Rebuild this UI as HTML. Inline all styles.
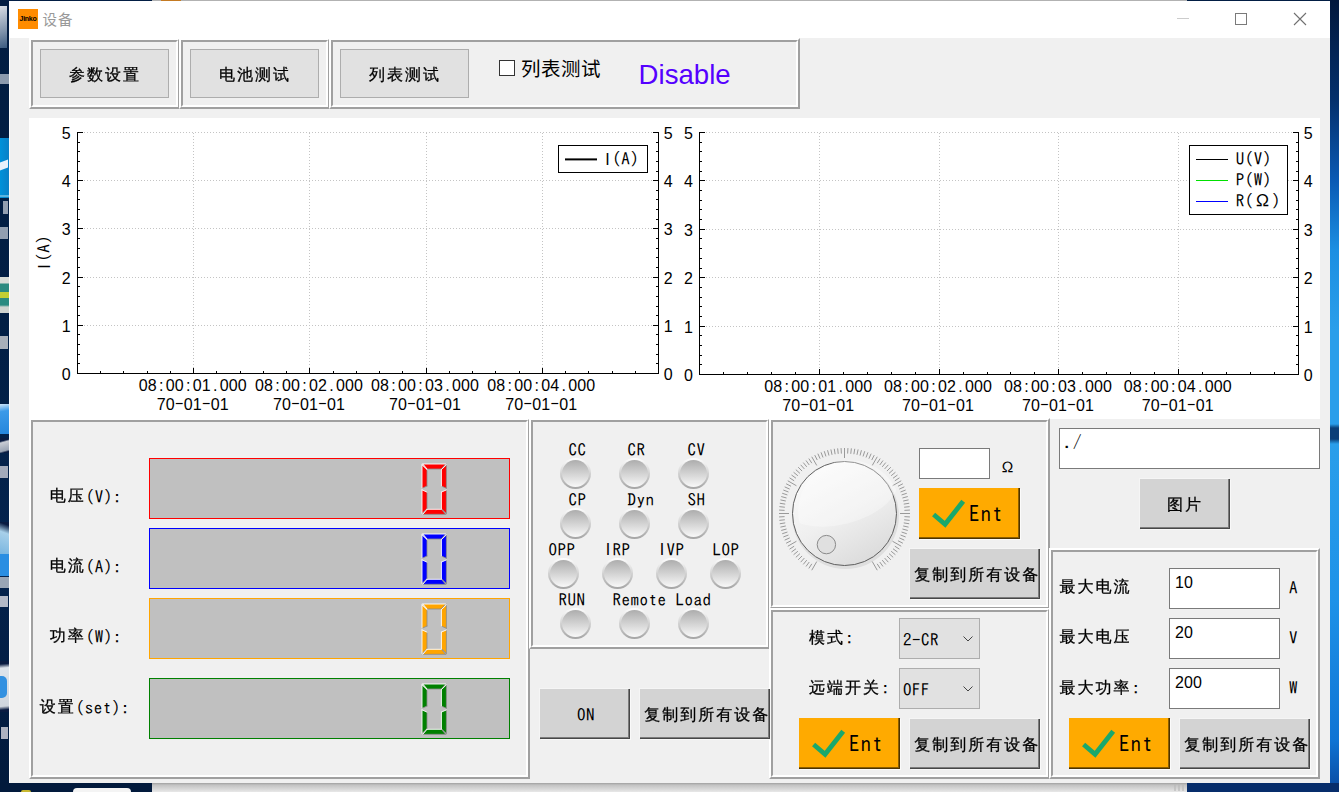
<!DOCTYPE html><html lang="zh"><head><meta charset="utf-8"><title>设备</title><style>
*{box-sizing:border-box;margin:0;padding:0}
html,body{width:1339px;height:792px;overflow:hidden}
body{position:relative;background:#021e44;font-family:"IPAGothic","Liberation Mono","WenQuanYi Zen Hei",monospace;font-size:17px;letter-spacing:.5px;color:#000;line-height:18px}
div,span,svg,i,b{position:absolute;display:block}
.cj{font-family:"Liberation Sans","WenQuanYi Zen Hei","Noto Sans CJK SC",sans-serif;font-size:16px;letter-spacing:2px;-webkit-text-stroke:.28px #000}
.la{font-family:"IPAGothic","Liberation Mono",monospace;font-size:17px;letter-spacing:.5px;position:relative;top:1.5px;display:inline;-webkit-text-stroke:0}
.nm{font-family:"Liberation Sans",sans-serif;font-size:16px;letter-spacing:.1px}
.win{left:9px;top:1px;width:1321px;height:782px;background:#f0f0f0;box-shadow:inset 1px 0 0 #fbfbfb}
.tb{left:0;top:0;width:1321px;height:37px;background:#fff}
.box{border:2px solid;border-color:#fff #a0a0a0 #a0a0a0 #fff;background:#f0f0f0}
.box:before{content:"";position:absolute;left:0;top:0;right:0;bottom:0;border:2px solid;border-color:#a0a0a0 #fff #fff #a0a0a0}
.tbtn{border:1px solid #adadad;background:#e1e1e1;text-align:center;line-height:50px;height:49px;width:129px;padding-left:1px}
.btn{background:#d3d3d3;box-shadow:inset -1px -1px 0 #474747,inset -2px -2px 0 #7c7c7c,1px 1px 0 #f9f9f9,-1px -1px 0 #f5f5f5;text-align:center;white-space:nowrap;overflow:hidden}
.ent{background:#ffaa00;box-shadow:inset -1px -1px 0 #4d3300,inset -2px -2px 0 #8c5e00,1px 1px 0 #fbfbfb}
.lcd{background:#c0c0c0;border:1px solid;width:361px;height:61px;left:140px}
.inp{background:#fff;border:1px solid #7a7a7a}
.cmb{background:#e1e1e1;border:1px solid #adadad;width:81px;height:41px}
.lbl{white-space:nowrap}
.ip{font-family:"IPAGothic","Liberation Mono",monospace;font-size:17px;letter-spacing:0}
.led{width:31px;height:31px;border-radius:50%;background:linear-gradient(#fff,#a4a4a4)}
.led:before{content:"";position:absolute;left:2px;top:2px;right:2px;bottom:2px;border-radius:50%;background:linear-gradient(#adadad,#f8f8f8)}
</style></head><body>
<div style="left:0;top:0;width:9px;height:792px;background:linear-gradient(#021d42,#021f45 40%,#04234e 70%,#021a3c)"><i style="left:0;top:6px;width:7px;height:42px;background:linear-gradient(160deg,#d8dde4,#7f93ab 60%,#3a5a80)"></i><i style="left:0;top:74px;width:9px;height:10px;background:#c8d0dc;opacity:.7"></i><i style="left:0;top:138px;width:9px;height:60px;background:linear-gradient(90deg,#0092da,#0a80c6)"></i><i style="left:0;top:195px;width:9px;height:2px;background:#5ab4e0"></i><i style="left:0;top:161px;width:8px;height:8px;background:#e8f2fb;transform:skewY(-20deg)"></i><i style="left:3px;top:201px;width:5px;height:13px;background:#d0d6e0;opacity:.7"></i><i style="left:0;top:227px;width:8px;height:12px;background:#d0d6e0;opacity:.7"></i><i style="left:0;top:277px;width:9px;height:36px;background:linear-gradient(#d8dcd8 0,#d8dcd8 6px,#2a8a80 7px,#2a8a80 28px,#d0d4d0 30px)"></i><i style="left:0;top:292px;width:9px;height:6px;background:#e8e020;opacity:.8"></i><i style="left:0;top:336px;width:8px;height:13px;background:#e0e0e0;opacity:.75"></i><i style="left:0;top:404px;width:9px;height:30px;background:linear-gradient(170deg,#cfe6fa 0,#3b9ae8 25%,#2586dc)"></i><i style="left:0;top:438px;width:9px;height:15px;background:linear-gradient(165deg,#0a1c42 20%,#c8ccd4 30%,#9aa4b4 80%,#0a1c42 90%)"></i><i style="left:0;top:466px;width:8px;height:12px;background:#d8d8e0;opacity:.75"></i><i style="left:0;top:522px;width:9px;height:32px;background:linear-gradient(200deg,#0a1c42 10%,#a8d0ea 35%,#7ab6e0)"></i><i style="left:0;top:554px;width:9px;height:22px;background:#2a8ee2"></i><i style="left:0;top:577px;width:9px;height:11px;background:#9aa6b6"></i><i style="left:0;top:596px;width:8px;height:11px;background:#e0e0e6;opacity:.8"></i><i style="left:0;top:661px;width:9px;height:51px;background:linear-gradient(175deg,#0a1c42 6%,#dfe5ec 14%,#cfd6de 88%,#0a1c42 95%)"></i><i style="left:0;top:676px;width:7px;height:22px;background:#2088e0;border-radius:0 5px 5px 0;opacity:.9"></i><i style="left:1px;top:727px;width:7px;height:12px;background:#d8d8e0;opacity:.8"></i></div>
<div style="left:1330px;top:0;width:9px;height:792px;background:linear-gradient(#02183c 0,#04306c 100px,#0a5ab4 180px,#1c8fe2 250px,#2a9eea 330px,#2a9eea 424px,#0b3f78 428px,#0b3f78 439px,#2a9eea 444px,#1e92e8 600px,#0f74d4 740px,#0a50a8 783px,#06245a 792px)"></div>
<div style="left:0;top:783px;width:1339px;height:9px;background:#021a3c"></div>
<div style="left:152px;top:783px;width:1035px;height:9px;background:linear-gradient(#a0a0a0,#c2c2c2 2px,#e8e8e8)"></div>
<div style="left:1187px;top:783px;width:152px;height:9px;background:#072d6b"></div><div style="left:1174px;top:784px;width:11px;height:7px;background:repeating-linear-gradient(90deg,#b8b8b8 0 2px,transparent 2px 4px);opacity:.6"></div>
<div style="left:73px;top:788px;width:58px;height:8px;background:#f4f4f4;border-radius:5px"></div><div style="left:21px;top:790px;width:10px;height:4px;background:#c8b830;border-radius:4px"></div>
<div style="left:152px;top:0;width:1035px;height:1px;background:#b2b2b2"></div><div style="left:161px;top:0;width:20px;height:1px;background:#c47a22"></div>
<div class="win">
<div class="tb"></div>
<div style="left:9px;top:8px;width:20px;height:20px;background:#ff8c00;font:bold 7px/20px 'Liberation Sans',sans-serif;text-align:center;letter-spacing:-0.3px">Jinko</div>
<div class="lbl" style="left:33.5px;top:7.5px;font:14.5px/22px 'Liberation Sans','Noto Sans CJK SC',sans-serif;letter-spacing:1px;color:#999">设备</div>
<svg style="left:1161px;top:7px" width="150" height="24" viewBox="1170 8 150 24"><path d="M1177 18.5H1189" stroke="#ccc" stroke-width="1"/><rect x="1235.5" y="13.5" width="11" height="11" fill="none" stroke="#7a7a7a"/><path d="M1294 13L1306 25M1306 13L1294 25" stroke="#707070" stroke-width="1.1"/></svg>
<div class="box" style="left:20px;top:37px;width:151px;height:71px"></div>
<div class="box" style="left:170px;top:37px;width:151px;height:71px"></div>
<div class="box" style="left:320px;top:37px;width:471px;height:71px"></div>
<div class="tbtn cj" style="left:31px;top:48px">参数设置</div>
<div class="tbtn cj" style="left:181px;top:48px">电池测试</div>
<div class="tbtn cj" style="left:331px;top:48px">列表测试</div>
<div style="left:490px;top:59px;width:16px;height:16px;background:#fff;border:1px solid #333"></div>
<div class="lbl" style="left:512px;top:55.2px;font:19.5px/26px 'Liberation Sans','Noto Sans CJK SC',sans-serif;letter-spacing:.5px">列表测试</div>
<div class="lbl" style="left:629.6px;top:57.6px;font:27.6px/32px 'Liberation Sans',sans-serif;letter-spacing:0;color:#5500ff">Disable</div>
<div style="left:20px;top:117px;width:1291px;height:301px;background:#fff"></div>
<svg style="left:20px;top:117px" width="1291" height="301" viewBox="29 118 1291 301" font-family="IPAGothic,'Liberation Mono',monospace" font-size="17" letter-spacing="0.5"><path d="M78 325.5H658M78 277.5H658M78 228.5H658M78 180.5H658M78 132.5H658M193.5 133.0V373.5M309.5 133.0V373.5M426.5 133.0V373.5M542.5 133.0V373.5" stroke="#c4c4c4" stroke-width="1" stroke-dasharray="1 2" fill="none"/><path d="M77.5 132.0V374.0M658.5 132.0V374.0M77 373.5H659M78 373.5h5M658 373.5h-5M78 363.5h2M658 363.5h-2M78 354.5h2M658 354.5h-2M78 344.5h2M658 344.5h-2M78 334.5h2M658 334.5h-2M78 325.5h5M658 325.5h-5M78 315.5h2M658 315.5h-2M78 306.5h2M658 306.5h-2M78 296.5h2M658 296.5h-2M78 286.5h2M658 286.5h-2M78 277.5h5M658 277.5h-5M78 267.5h2M658 267.5h-2M78 257.5h2M658 257.5h-2M78 248.5h2M658 248.5h-2M78 238.5h2M658 238.5h-2M78 228.5h5M658 228.5h-5M78 219.5h2M658 219.5h-2M78 209.5h2M658 209.5h-2M78 199.5h2M658 199.5h-2M78 190.5h2M658 190.5h-2M78 180.5h5M658 180.5h-5M78 171.5h2M658 171.5h-2M78 161.5h2M658 161.5h-2M78 151.5h2M658 151.5h-2M78 142.5h2M658 142.5h-2M78 132.5h5M658 132.5h-5M100.5 373.0v-2M123.5 373.0v-2M147.5 373.0v-2M170.5 373.0v-2M193.5 373.0v-5M216.5 373.0v-2M240.5 373.0v-2M263.5 373.0v-2M286.5 373.0v-2M309.5 373.0v-5M333.5 373.0v-2M356.5 373.0v-2M379.5 373.0v-2M402.5 373.0v-2M426.5 373.0v-5M449.5 373.0v-2M472.5 373.0v-2M495.5 373.0v-2M519.5 373.0v-2M542.5 373.0v-5M565.5 373.0v-2M588.5 373.0v-2M612.5 373.0v-2M635.5 373.0v-2" stroke="#000" stroke-width="1" fill="none"/><text class="nm" x="66.2" y="380.0" text-anchor="middle">0</text><text class="nm" x="668.2" y="380.0" text-anchor="middle">0</text><text class="nm" x="66.2" y="332.0" text-anchor="middle">1</text><text class="nm" x="668.2" y="332.0" text-anchor="middle">1</text><text class="nm" x="66.2" y="284.0" text-anchor="middle">2</text><text class="nm" x="668.2" y="284.0" text-anchor="middle">2</text><text class="nm" x="66.2" y="235.0" text-anchor="middle">3</text><text class="nm" x="668.2" y="235.0" text-anchor="middle">3</text><text class="nm" x="66.2" y="187.0" text-anchor="middle">4</text><text class="nm" x="668.2" y="187.0" text-anchor="middle">4</text><text class="nm" x="66.2" y="139.0" text-anchor="middle">5</text><text class="nm" x="668.2" y="139.0" text-anchor="middle">5</text><text class="nm" x="143.2 152.2 161.2 170.2 179.2 188.2 197.2 206.2 215.2 224.2 233.2 242.2" y="391.0" text-anchor="middle">08:00:01.000</text><text class="nm" x="161.2 170.2 179.2 188.2 197.2 206.2 215.2 224.2" y="410.0" text-anchor="middle">70<tspan class="ip">-</tspan>01<tspan class="ip">-</tspan>01</text><text class="nm" x="259.4 268.4 277.4 286.4 295.4 304.4 313.4 322.4 331.4 340.4 349.4 358.4" y="391.0" text-anchor="middle">08:00:02.000</text><text class="nm" x="277.4 286.4 295.4 304.4 313.4 322.4 331.4 340.4" y="410.0" text-anchor="middle">70<tspan class="ip">-</tspan>01<tspan class="ip">-</tspan>01</text><text class="nm" x="375.6 384.6 393.6 402.6 411.6 420.6 429.6 438.6 447.6 456.6 465.6 474.6" y="391.0" text-anchor="middle">08:00:03.000</text><text class="nm" x="393.6 402.6 411.6 420.6 429.6 438.6 447.6 456.6" y="410.0" text-anchor="middle">70<tspan class="ip">-</tspan>01<tspan class="ip">-</tspan>01</text><text class="nm" x="491.8 500.8 509.8 518.8 527.8 536.8 545.8 554.8 563.8 572.8 581.8 590.8" y="391.0" text-anchor="middle">08:00:04.000</text><text class="nm" x="509.8 518.8 527.8 536.8 545.8 554.8 563.8 572.8" y="410.0" text-anchor="middle">70<tspan class="ip">-</tspan>01<tspan class="ip">-</tspan>01</text><path d="M700 326.5H1298M700 277.5H1298M700 229.5H1298M700 180.5H1298M700 132.5H1298M819.5 133.0V374.5M939.5 133.0V374.5M1058.5 133.0V374.5M1178.5 133.0V374.5" stroke="#c4c4c4" stroke-width="1" stroke-dasharray="1 2" fill="none"/><path d="M699.5 132.0V375.0M1298.5 132.0V375.0M699 374.5H1299M700 374.5h5M1298 374.5h-5M700 364.5h2M1298 364.5h-2M700 355.5h2M1298 355.5h-2M700 345.5h2M1298 345.5h-2M700 335.5h2M1298 335.5h-2M700 326.5h5M1298 326.5h-5M700 316.5h2M1298 316.5h-2M700 306.5h2M1298 306.5h-2M700 297.5h2M1298 297.5h-2M700 287.5h2M1298 287.5h-2M700 277.5h5M1298 277.5h-5M700 268.5h2M1298 268.5h-2M700 258.5h2M1298 258.5h-2M700 248.5h2M1298 248.5h-2M700 238.5h2M1298 238.5h-2M700 229.5h5M1298 229.5h-5M700 219.5h2M1298 219.5h-2M700 209.5h2M1298 209.5h-2M700 200.5h2M1298 200.5h-2M700 190.5h2M1298 190.5h-2M700 180.5h5M1298 180.5h-5M700 171.5h2M1298 171.5h-2M700 161.5h2M1298 161.5h-2M700 151.5h2M1298 151.5h-2M700 142.5h2M1298 142.5h-2M700 132.5h5M1298 132.5h-5M723.5 374.0v-2M747.5 374.0v-2M771.5 374.0v-2M795.5 374.0v-2M819.5 374.0v-5M843.5 374.0v-2M867.5 374.0v-2M891.5 374.0v-2M915.5 374.0v-2M939.5 374.0v-5M963.5 374.0v-2M987.5 374.0v-2M1010.5 374.0v-2M1034.5 374.0v-2M1058.5 374.0v-5M1082.5 374.0v-2M1106.5 374.0v-2M1130.5 374.0v-2M1154.5 374.0v-2M1178.5 374.0v-5M1202.5 374.0v-2M1226.5 374.0v-2M1250.5 374.0v-2M1274.5 374.0v-2" stroke="#000" stroke-width="1" fill="none"/><text class="nm" x="688.4" y="381.0" text-anchor="middle">0</text><text class="nm" x="1308.2" y="381.0" text-anchor="middle">0</text><text class="nm" x="688.4" y="333.0" text-anchor="middle">1</text><text class="nm" x="1308.2" y="333.0" text-anchor="middle">1</text><text class="nm" x="688.4" y="284.0" text-anchor="middle">2</text><text class="nm" x="1308.2" y="284.0" text-anchor="middle">2</text><text class="nm" x="688.4" y="236.0" text-anchor="middle">3</text><text class="nm" x="1308.2" y="236.0" text-anchor="middle">3</text><text class="nm" x="688.4" y="187.0" text-anchor="middle">4</text><text class="nm" x="1308.2" y="187.0" text-anchor="middle">4</text><text class="nm" x="688.4" y="139.0" text-anchor="middle">5</text><text class="nm" x="1308.2" y="139.0" text-anchor="middle">5</text><text class="nm" x="768.8 777.8 786.8 795.8 804.8 813.8 822.8 831.8 840.8 849.8 858.8 867.8" y="392.0" text-anchor="middle">08:00:01.000</text><text class="nm" x="786.8 795.8 804.8 813.8 822.8 831.8 840.8 849.8" y="411.0" text-anchor="middle">70<tspan class="ip">-</tspan>01<tspan class="ip">-</tspan>01</text><text class="nm" x="888.6 897.6 906.6 915.6 924.6 933.6 942.6 951.6 960.6 969.6 978.6 987.6" y="392.0" text-anchor="middle">08:00:02.000</text><text class="nm" x="906.6 915.6 924.6 933.6 942.6 951.6 960.6 969.6" y="411.0" text-anchor="middle">70<tspan class="ip">-</tspan>01<tspan class="ip">-</tspan>01</text><text class="nm" x="1008.4 1017.4 1026.4 1035.4 1044.4 1053.4 1062.4 1071.4 1080.4 1089.4 1098.4 1107.4" y="392.0" text-anchor="middle">08:00:03.000</text><text class="nm" x="1026.4 1035.4 1044.4 1053.4 1062.4 1071.4 1080.4 1089.4" y="411.0" text-anchor="middle">70<tspan class="ip">-</tspan>01<tspan class="ip">-</tspan>01</text><text class="nm" x="1128.2 1137.2 1146.2 1155.2 1164.2 1173.2 1182.2 1191.2 1200.2 1209.2 1218.2 1227.2" y="392.0" text-anchor="middle">08:00:04.000</text><text class="nm" x="1146.2 1155.2 1164.2 1173.2 1182.2 1191.2 1200.2 1209.2" y="411.0" text-anchor="middle">70<tspan class="ip">-</tspan>01<tspan class="ip">-</tspan>01</text><g transform="translate(50 253) rotate(-90)"><text class="nm" x="-13.5 -4.5 4.5 13.5" y="0.0" text-anchor="middle">I<tspan class="ip">(</tspan><tspan class="ip">A</tspan><tspan class="ip">)</tspan></text></g><rect x="558.5" y="145.5" width="89" height="27" fill="#fff" stroke="#000"/><path d="M565 159.4H597" stroke="#000" stroke-width="2"/><text class="nm" x="607.5 616.5 625.5 634.5" y="165.0" text-anchor="middle">I<tspan class="ip">(</tspan><tspan class="ip">A</tspan><tspan class="ip">)</tspan></text><rect x="1189.5" y="145.5" width="98" height="69" fill="#fff" stroke="#000"/><path d="M1196 159.5H1228" stroke="#000" stroke-width="1"/><text class="nm" x="1240.0 1249.0 1258.0 1267.0" y="165.0" text-anchor="middle"><tspan class="ip">U</tspan><tspan class="ip">(</tspan><tspan class="ip">V</tspan><tspan class="ip">)</tspan></text><path d="M1196 180.5H1228" stroke="#00e000" stroke-width="1"/><text class="nm" x="1240.0 1249.0 1258.0 1267.0" y="186.0" text-anchor="middle"><tspan class="ip">P</tspan><tspan class="ip">(</tspan><tspan class="ip">W</tspan><tspan class="ip">)</tspan></text><path d="M1196 201.5H1228" stroke="#0000ff" stroke-width="1"/><text class="ip" x="1240 1249 1262.5 1276" y="207" text-anchor="middle">R(Ω)</text></svg>
<div class="box" style="left:20px;top:417px;width:501px;height:361px"></div>
<div class="box" style="left:520px;top:417px;width:241px;height:231px"></div>
<div class="box" style="left:760px;top:417px;width:281px;height:191px"></div>
<div class="box" style="left:760px;top:607px;width:281px;height:171px"></div>
<div class="box" style="left:1040px;top:547px;width:271px;height:231px"></div>
<div class="lbl cj" style="left:40.7px;top:483.3px;line-height:22px">电压<span class="la">(V):</span></div>
<div class="lbl cj" style="left:40.7px;top:553.3px;line-height:22px">电流<span class="la">(A):</span></div>
<div class="lbl cj" style="left:40.7px;top:623.3px;line-height:22px">功率<span class="la">(W):</span></div>
<div class="lbl cj" style="left:30.700000000000003px;top:694.3px;line-height:22px">设置<span class="la">(set):</span></div>
<div class="lcd" style="top:457px;border-color:#ff0000"><svg style="left:270.4px;top:2.5px" width="29" height="55" viewBox="-2 -2 29 55"><polygon points="0.8,0.0 23.6,0.0 19.4,5.0 5.0,5.0" fill="#ff0000"/><polygon points="24.4,0.8 24.4,24.3 19.4,22.1 19.4,5.6" fill="#ff0000"/><polygon points="24.4,25.9 24.4,49.5 19.4,44.7 19.4,28.1" fill="#ff0000"/><polygon points="0.8,50.3 23.6,50.3 19.4,45.3 5.0,45.3" fill="#ff0000"/><polygon points="0.0,25.9 0.0,49.5 5.0,44.7 5.0,28.1" fill="#ff0000"/><polygon points="0.0,0.8 0.0,24.3 5.0,22.1 5.0,5.6" fill="#ff0000"/><path d="M23.6 0.0L19.4 5.0M19.4 5.0L5.0 5.0M24.4 0.8L24.4 24.3M24.4 24.3L19.4 22.1M24.4 25.9L24.4 49.5M24.4 49.5L19.4 44.7M0.8 50.3L23.6 50.3M23.6 50.3L19.4 45.3M0.0 49.5L5.0 44.7M5.0 44.7L5.0 28.1M0.0 24.3L5.0 22.1M5.0 22.1L5.0 5.6" stroke="#8c8c8c" stroke-width="0.8" fill="none" stroke-linecap="round"/><path d="M0.8 0.0L23.6 0.0M5.0 5.0L0.8 0.0M19.4 22.1L19.4 5.6M19.4 5.6L24.4 0.8M19.4 44.7L19.4 28.1M19.4 28.1L24.4 25.9M19.4 45.3L5.0 45.3M5.0 45.3L0.8 50.3M0.0 25.9L0.0 49.5M5.0 28.1L0.0 25.9M0.0 0.8L0.0 24.3M5.0 5.6L0.0 0.8" stroke="#fff" stroke-width="0.9" fill="none" stroke-linecap="round"/></svg></div>
<div class="lcd" style="top:527px;border-color:#0000ff"><svg style="left:270.4px;top:2.5px" width="29" height="55" viewBox="-2 -2 29 55"><polygon points="0.8,0.0 23.6,0.0 19.4,5.0 5.0,5.0" fill="#0000ff"/><polygon points="24.4,0.8 24.4,24.3 19.4,22.1 19.4,5.6" fill="#0000ff"/><polygon points="24.4,25.9 24.4,49.5 19.4,44.7 19.4,28.1" fill="#0000ff"/><polygon points="0.8,50.3 23.6,50.3 19.4,45.3 5.0,45.3" fill="#0000ff"/><polygon points="0.0,25.9 0.0,49.5 5.0,44.7 5.0,28.1" fill="#0000ff"/><polygon points="0.0,0.8 0.0,24.3 5.0,22.1 5.0,5.6" fill="#0000ff"/><path d="M23.6 0.0L19.4 5.0M19.4 5.0L5.0 5.0M24.4 0.8L24.4 24.3M24.4 24.3L19.4 22.1M24.4 25.9L24.4 49.5M24.4 49.5L19.4 44.7M0.8 50.3L23.6 50.3M23.6 50.3L19.4 45.3M0.0 49.5L5.0 44.7M5.0 44.7L5.0 28.1M0.0 24.3L5.0 22.1M5.0 22.1L5.0 5.6" stroke="#8c8c8c" stroke-width="0.8" fill="none" stroke-linecap="round"/><path d="M0.8 0.0L23.6 0.0M5.0 5.0L0.8 0.0M19.4 22.1L19.4 5.6M19.4 5.6L24.4 0.8M19.4 44.7L19.4 28.1M19.4 28.1L24.4 25.9M19.4 45.3L5.0 45.3M5.0 45.3L0.8 50.3M0.0 25.9L0.0 49.5M5.0 28.1L0.0 25.9M0.0 0.8L0.0 24.3M5.0 5.6L0.0 0.8" stroke="#fff" stroke-width="0.9" fill="none" stroke-linecap="round"/></svg></div>
<div class="lcd" style="top:597px;border-color:#ffa500"><svg style="left:270.4px;top:2.5px" width="29" height="55" viewBox="-2 -2 29 55"><polygon points="0.8,0.0 23.6,0.0 19.4,5.0 5.0,5.0" fill="#ffa500"/><polygon points="24.4,0.8 24.4,24.3 19.4,22.1 19.4,5.6" fill="#ffa500"/><polygon points="24.4,25.9 24.4,49.5 19.4,44.7 19.4,28.1" fill="#ffa500"/><polygon points="0.8,50.3 23.6,50.3 19.4,45.3 5.0,45.3" fill="#ffa500"/><polygon points="0.0,25.9 0.0,49.5 5.0,44.7 5.0,28.1" fill="#ffa500"/><polygon points="0.0,0.8 0.0,24.3 5.0,22.1 5.0,5.6" fill="#ffa500"/><path d="M23.6 0.0L19.4 5.0M19.4 5.0L5.0 5.0M24.4 0.8L24.4 24.3M24.4 24.3L19.4 22.1M24.4 25.9L24.4 49.5M24.4 49.5L19.4 44.7M0.8 50.3L23.6 50.3M23.6 50.3L19.4 45.3M0.0 49.5L5.0 44.7M5.0 44.7L5.0 28.1M0.0 24.3L5.0 22.1M5.0 22.1L5.0 5.6" stroke="#8c8c8c" stroke-width="0.8" fill="none" stroke-linecap="round"/><path d="M0.8 0.0L23.6 0.0M5.0 5.0L0.8 0.0M19.4 22.1L19.4 5.6M19.4 5.6L24.4 0.8M19.4 44.7L19.4 28.1M19.4 28.1L24.4 25.9M19.4 45.3L5.0 45.3M5.0 45.3L0.8 50.3M0.0 25.9L0.0 49.5M5.0 28.1L0.0 25.9M0.0 0.8L0.0 24.3M5.0 5.6L0.0 0.8" stroke="#fff" stroke-width="0.9" fill="none" stroke-linecap="round"/></svg></div>
<div class="lcd" style="top:677px;border-color:#008000"><svg style="left:270.4px;top:2.5px" width="29" height="55" viewBox="-2 -2 29 55"><polygon points="0.8,0.0 23.6,0.0 19.4,5.0 5.0,5.0" fill="#008000"/><polygon points="24.4,0.8 24.4,24.3 19.4,22.1 19.4,5.6" fill="#008000"/><polygon points="24.4,25.9 24.4,49.5 19.4,44.7 19.4,28.1" fill="#008000"/><polygon points="0.8,50.3 23.6,50.3 19.4,45.3 5.0,45.3" fill="#008000"/><polygon points="0.0,25.9 0.0,49.5 5.0,44.7 5.0,28.1" fill="#008000"/><polygon points="0.0,0.8 0.0,24.3 5.0,22.1 5.0,5.6" fill="#008000"/><path d="M23.6 0.0L19.4 5.0M19.4 5.0L5.0 5.0M24.4 0.8L24.4 24.3M24.4 24.3L19.4 22.1M24.4 25.9L24.4 49.5M24.4 49.5L19.4 44.7M0.8 50.3L23.6 50.3M23.6 50.3L19.4 45.3M0.0 49.5L5.0 44.7M5.0 44.7L5.0 28.1M0.0 24.3L5.0 22.1M5.0 22.1L5.0 5.6" stroke="#8c8c8c" stroke-width="0.8" fill="none" stroke-linecap="round"/><path d="M0.8 0.0L23.6 0.0M5.0 5.0L0.8 0.0M19.4 22.1L19.4 5.6M19.4 5.6L24.4 0.8M19.4 44.7L19.4 28.1M19.4 28.1L24.4 25.9M19.4 45.3L5.0 45.3M5.0 45.3L0.8 50.3M0.0 25.9L0.0 49.5M5.0 28.1L0.0 25.9M0.0 0.8L0.0 24.3M5.0 5.6L0.0 0.8" stroke="#fff" stroke-width="0.9" fill="none" stroke-linecap="round"/></svg></div>
<div class="lbl " style="left:559.5px;top:440px;">CC</div>
<div class="lbl " style="left:618.5px;top:440px;">CR</div>
<div class="lbl " style="left:678.5px;top:440px;">CV</div>
<div class="lbl " style="left:559.5px;top:490px;">CP</div>
<div class="lbl " style="left:618.5px;top:490px;">Dyn</div>
<div class="lbl " style="left:678.5px;top:490px;">SH</div>
<div class="lbl " style="left:539.5px;top:540px;">OPP</div>
<div class="lbl " style="left:594.5px;top:540px;"><span style="font-family:'Liberation Sans',sans-serif;font-size:16px;display:inline-block;position:relative;top:-1px;width:9px;text-align:center;letter-spacing:0">I</span>RP</div>
<div class="lbl " style="left:648.5px;top:540px;"><span style="font-family:'Liberation Sans',sans-serif;font-size:16px;display:inline-block;position:relative;top:-1px;width:9px;text-align:center;letter-spacing:0">I</span>VP</div>
<div class="lbl " style="left:703.5px;top:540px;">LOP</div>
<div class="lbl " style="left:549.5px;top:590px;">RUN</div>
<div class="lbl " style="left:603.5px;top:590px;">Remote Load</div>
<div class="led" style="left:550.8px;top:457.0px"></div>
<div class="led" style="left:609.5px;top:457.0px"></div>
<div class="led" style="left:669.1px;top:457.0px"></div>
<div class="led" style="left:550.8px;top:507.0px"></div>
<div class="led" style="left:609.5px;top:507.0px"></div>
<div class="led" style="left:669.1px;top:507.0px"></div>
<div class="led" style="left:550.8px;top:607.0px"></div>
<div class="led" style="left:609.5px;top:607.0px"></div>
<div class="led" style="left:669.1px;top:607.0px"></div>
<div class="led" style="left:538.5px;top:557.0px"></div>
<div class="led" style="left:592.5px;top:557.0px"></div>
<div class="led" style="left:647.3px;top:557.0px"></div>
<div class="led" style="left:701.3px;top:557.0px"></div>
<div class="btn" style="left:531px;top:688px;width:90px;height:50px;line-height:51px;text-indent:2px;">ON</div>
<div class="btn cj" style="left:631px;top:688px;width:130px;height:50px;line-height:51px;text-align:left;padding-left:4.3px;">复制到所有设备</div>
<svg style="left:763px;top:439px" width="146" height="150" viewBox="772 440 146 150"><defs><linearGradient id="kg" x1="0.25" y1="0" x2="0.8" y2="1"><stop offset="0" stop-color="#fbfbfb"/><stop offset="0.5" stop-color="#efefef"/><stop offset="1" stop-color="#d9d9d9"/></linearGradient><clipPath id="kc"><circle cx="844.5" cy="513.5" r="51.5"/></clipPath></defs><path d="M816.75 561.56L811.75 570.22M811.82 563.82L808.83 568.43M809.23 562.04L806.00 566.49M806.74 560.13L803.28 564.40M804.35 558.09L800.67 562.18M802.07 555.93L798.18 559.82M799.91 553.65L795.82 557.33M797.87 551.26L793.60 554.72M795.96 548.77L791.51 552.00M794.18 546.18L789.57 549.17M796.44 541.25L787.78 546.25M791.04 540.74L786.14 543.24M789.69 537.90L784.66 540.14M788.49 535.00L783.35 536.97M787.44 532.04L782.21 533.74M786.54 529.03L781.23 530.45M785.81 525.97L780.43 527.12M785.24 522.89L779.81 523.75M784.83 519.77L779.36 520.35M784.58 516.64L779.09 516.93M789.00 513.50L779.00 513.50M784.58 510.36L779.09 510.07M784.83 507.23L779.36 506.65M785.24 504.11L779.81 503.25M785.81 501.03L780.43 499.88M786.54 497.97L781.23 496.55M787.44 494.96L782.21 493.26M788.49 492.00L783.35 490.03M789.69 489.10L784.66 486.86M791.04 486.26L786.14 483.76M796.44 485.75L787.78 480.75M794.18 480.82L789.57 477.83M795.96 478.23L791.51 475.00M797.87 475.74L793.60 472.28M799.91 473.35L795.82 469.67M802.07 471.07L798.18 467.18M804.35 468.91L800.67 464.82M806.74 466.87L803.28 462.60M809.23 464.96L806.00 460.51M811.82 463.18L808.83 458.57M816.75 465.44L811.75 456.78M817.26 460.04L814.76 455.14M820.10 458.69L817.86 453.66M823.00 457.49L821.03 452.35M825.96 456.44L824.26 451.21M828.97 455.54L827.55 450.23M832.03 454.81L830.88 449.43M835.11 454.24L834.25 448.81M838.23 453.83L837.65 448.36M841.36 453.58L841.07 448.09M844.50 458.00L844.50 448.00M847.64 453.58L847.93 448.09M850.77 453.83L851.35 448.36M853.89 454.24L854.75 448.81M856.97 454.81L858.12 449.43M860.03 455.54L861.45 450.23M863.04 456.44L864.74 451.21M866.00 457.49L867.97 452.35M868.90 458.69L871.14 453.66M871.74 460.04L874.24 455.14M872.25 465.44L877.25 456.78M877.18 463.18L880.17 458.57M879.77 464.96L883.00 460.51M882.26 466.87L885.72 462.60M884.65 468.91L888.33 464.82M886.93 471.07L890.82 467.18M889.09 473.35L893.18 469.67M891.13 475.74L895.40 472.28M893.04 478.23L897.49 475.00M894.82 480.82L899.43 477.83M892.56 485.75L901.22 480.75M897.96 486.26L902.86 483.76M899.31 489.10L904.34 486.86M900.51 492.00L905.65 490.03M901.56 494.96L906.79 493.26M902.46 497.97L907.77 496.55M903.19 501.03L908.57 499.88M903.76 504.11L909.19 503.25M904.17 507.23L909.64 506.65M904.42 510.36L909.91 510.07M900.00 513.50L910.00 513.50M904.42 516.64L909.91 516.93M904.17 519.77L909.64 520.35M903.76 522.89L909.19 523.75M903.19 525.97L908.57 527.12M902.46 529.03L907.77 530.45M901.56 532.04L906.79 533.74M900.51 535.00L905.65 536.97M899.31 537.90L904.34 540.14M897.96 540.74L902.86 543.24M892.56 541.25L901.22 546.25M894.82 546.18L899.43 549.17M893.04 548.77L897.49 552.00M891.13 551.26L895.40 554.72M889.09 553.65L893.18 557.33M886.93 555.93L890.82 559.82M884.65 558.09L888.33 562.18M882.26 560.13L885.72 564.40M879.77 562.04L883.00 566.49M877.18 563.82L880.17 568.43M872.25 561.56L877.25 570.22" stroke="#949494" stroke-width="0.95" fill="none"/><circle cx="845.5" cy="515.5" r="53.5" fill="#000" opacity="0.07"/><circle cx="844.5" cy="513.5" r="52" fill="url(#kg)" stroke="#5e5e5e" stroke-width="1"/><ellipse cx="839.5" cy="491.5" rx="60" ry="33" transform="rotate(-14 839.5 491.5)" fill="#fff" opacity="0.32" clip-path="url(#kc)"/><circle cx="826.4" cy="544.6" r="9.2" fill="#e0e0e0" stroke="#8a8a8a" stroke-width="1"/></svg>
<div class="inp" style="left:910px;top:447px;width:71px;height:31px;border-color:#7a7a7a"></div>
<div class="lbl " style="left:991px;top:458px;font-size:15px">Ω</div>
<div class="btn ent" style="left:910px;top:487px;width:101px;height:51px"><svg style="left:13px;top:11px" width="34" height="30" viewBox="0 0 34 30"><path d="M1.6 15.5L13.1 25.3L31.2 2.3" fill="none" stroke="#1aa86c" stroke-width="4.8"/></svg><span class="lbl" style="left:50px;top:15px;font-size:21px;line-height:24px;letter-spacing:1px">Ent</span></div>
<div class="btn cj" style="left:901px;top:548px;width:130px;height:50px;line-height:51px;text-align:left;padding-left:4.3px;">复制到所有设备</div>
<div class="lbl cj" style="left:800px;top:624.5px;line-height:22px">模式<span class="la">:</span></div>
<div class="lbl cj" style="left:800px;top:674.5px;line-height:22px">远端开关<span class="la">:</span></div>
<div class="cmb" style="left:890px;top:617px"><span class="lbl" style="left:3px;top:12px">2-CR</span><svg style="left:62px;top:16px" width="12" height="8" viewBox="0 0 12 8"><path d="M1.5 1.5L6 6L10.5 1.5" fill="none" stroke="#444" stroke-width="1"/></svg></div>
<div class="cmb" style="left:890px;top:667px"><span class="lbl" style="left:3px;top:12px">OFF</span><svg style="left:62px;top:16px" width="12" height="8" viewBox="0 0 12 8"><path d="M1.5 1.5L6 6L10.5 1.5" fill="none" stroke="#444" stroke-width="1"/></svg></div>
<div class="btn ent" style="left:790px;top:717px;width:101px;height:51px"><svg style="left:13px;top:11px" width="34" height="30" viewBox="0 0 34 30"><path d="M1.6 15.5L13.1 25.3L31.2 2.3" fill="none" stroke="#1aa86c" stroke-width="4.8"/></svg><span class="lbl" style="left:50px;top:15px;font-size:21px;line-height:24px;letter-spacing:1px">Ent</span></div>
<div class="btn cj" style="left:901px;top:718px;width:130px;height:50px;line-height:51px;text-align:left;padding-left:4.3px;">复制到所有设备</div>
<div class="inp" style="left:1050px;top:427px;width:261px;height:41px"><span class="lbl" style="left:4px;top:4px">./</span></div>
<div class="btn cj" style="left:1131px;top:478px;width:90px;height:50px;line-height:51px;">图片</div>
<div class="lbl cj" style="left:1050.5px;top:574.5px;line-height:22px">最大电流</div>
<div class="inp" style="left:1160px;top:567px;width:111px;height:41px"><span class="lbl" style="left:5px;top:4px;letter-spacing:0"><span class="nm" style="position:static;display:inline;letter-spacing:.1px">10</span></span></div>
<div class="lbl " style="left:1280px;top:578px;">A</div>
<div class="lbl cj" style="left:1050.5px;top:624.5px;line-height:22px">最大电压</div>
<div class="inp" style="left:1160px;top:617px;width:111px;height:41px"><span class="lbl" style="left:5px;top:4px;letter-spacing:0"><span class="nm" style="position:static;display:inline;letter-spacing:.1px">20</span></span></div>
<div class="lbl " style="left:1280px;top:628px;">V</div>
<div class="lbl cj" style="left:1050.5px;top:674.5px;line-height:22px">最大功率<span class="la">:</span></div>
<div class="inp" style="left:1160px;top:667px;width:111px;height:41px"><span class="lbl" style="left:5px;top:4px;letter-spacing:0"><span class="nm" style="position:static;display:inline;letter-spacing:.1px">200</span></span></div>
<div class="lbl " style="left:1280px;top:678px;">W</div>
<div class="btn ent" style="left:1060px;top:717px;width:101px;height:51px"><svg style="left:13px;top:11px" width="34" height="30" viewBox="0 0 34 30"><path d="M1.6 15.5L13.1 25.3L31.2 2.3" fill="none" stroke="#1aa86c" stroke-width="4.8"/></svg><span class="lbl" style="left:50px;top:15px;font-size:21px;line-height:24px;letter-spacing:1px">Ent</span></div>
<div class="btn cj" style="left:1171px;top:718px;width:130px;height:50px;line-height:51px;text-align:left;padding-left:4.3px;">复制到所有设备</div>
</div>
</body></html>
